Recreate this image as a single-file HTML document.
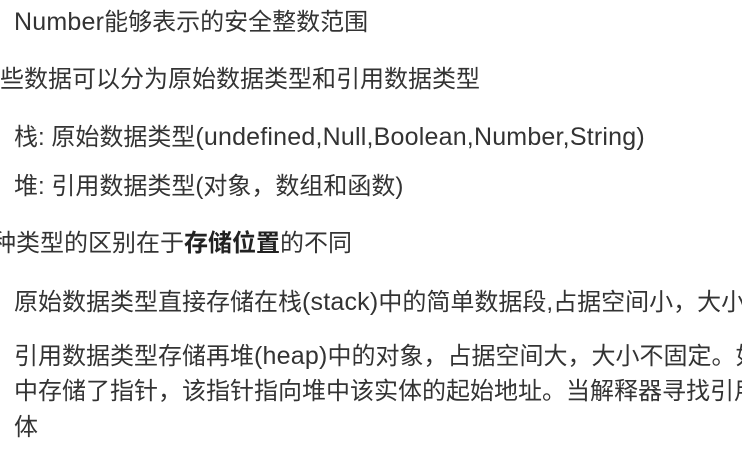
<!DOCTYPE html>
<html><head><meta charset="utf-8">
<style>
html,body{margin:0;padding:0;background:#fff;width:742px;height:471px;overflow:hidden;position:relative}
.l{position:absolute;white-space:nowrap;font-family:"Liberation Sans","Noto Sans CJK SC",sans-serif;font-size:24px;color:#333;line-height:30px}
.e{font-size:25px;letter-spacing:0.2px}
b{font-weight:bold;color:#222}
</style></head><body>
<div class="l" style="left:14px;top:7px"><span class="e">Number</span>能够表示的安全整数范围</div>
<div class="l" style="left:-24px;top:65px">这些数据可以分为原始数据类型和引用数据类型</div>
<div class="l" style="left:14px;top:122px">栈: 原始数据类型<span class="e">(undefined,Null,Boolean,Number,String)</span></div>
<div class="l" style="left:14px;top:172px">堆: 引用数据类型(对象，数组和函数)</div>
<div class="l" style="left:-32px;top:229px">两种类型的区别在于<b>存储位置</b>的不同</div>
<div class="l" style="left:14px;top:287px">原始数据类型直接存储在栈<span class="e">(stack)</span>中的简单数据段,占据空间小，大小固定</div>
<div class="l" style="left:14px;top:341px">引用数据类型存储再堆<span class="e">(heap)</span>中的对象，占据空间大，大小不固定。如果</div>
<div class="l" style="left:14px;top:377px">中存储了指针，该指针指向堆中该实体的起始地址。当解释器寻找引用值</div>
<div class="l" style="left:14px;top:413px">体</div>
</body></html>
